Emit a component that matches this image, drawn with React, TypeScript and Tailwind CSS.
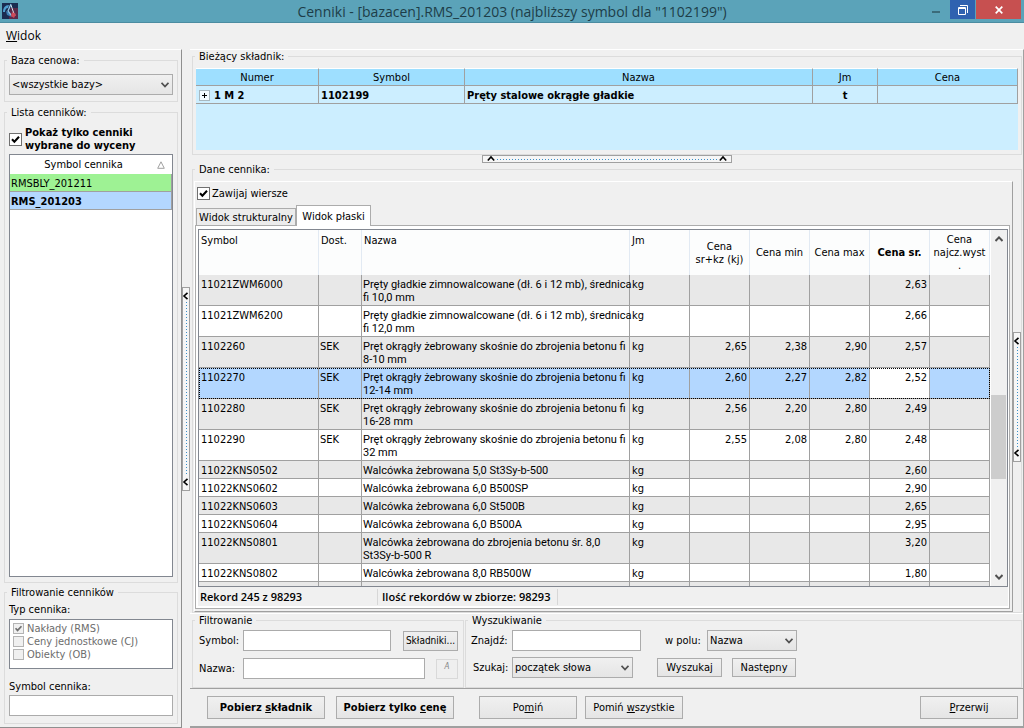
import React from "react";
import clsx from "clsx";

const priceLists = [
  { symbol: "RMSBLY_201211", selected: false },
  { symbol: "RMS_201203", selected: true },
];

const types = [
  { label: "Nakłady (RMS)", checked: true },
  { label: "Ceny jednostkowe (CJ)", checked: false },
  { label: "Obiekty (OB)", checked: false },
];

type Row = {
  symbol: string;
  dost?: string;
  name: string[];
  prices: [string, string, string, string];
};

const rows: Row[] = [
  { symbol: "11021ZWM6000", name: ["Pręty gładkie zimnowalcowane (dł. 6 i 12 mb), średnica", "fi 10,0 mm"], prices: ["", "", "", "2,63"] },
  { symbol: "11021ZWM6200", name: ["Pręty gładkie zimnowalcowane (dł. 6 i 12 mb), średnica", "fi 12,0 mm"], prices: ["", "", "", "2,66"] },
  { symbol: "1102260", dost: "SEK", name: ["Pręt okrągły żebrowany skośnie do zbrojenia betonu fi", "8-10 mm"], prices: ["2,65", "2,38", "2,90", "2,57"] },
  { symbol: "1102270", dost: "SEK", name: ["Pręt okrągły żebrowany skośnie do zbrojenia betonu fi", "12-14 mm"], prices: ["2,60", "2,27", "2,82", "2,52"] },
  { symbol: "1102280", dost: "SEK", name: ["Pręt okrągły żebrowany skośnie do zbrojenia betonu fi", "16-28 mm"], prices: ["2,56", "2,20", "2,80", "2,49"] },
  { symbol: "1102290", dost: "SEK", name: ["Pręt okrągły żebrowany skośnie do zbrojenia betonu fi", "32 mm"], prices: ["2,55", "2,08", "2,80", "2,48"] },
  { symbol: "11022KNS0502", name: ["Walcówka żebrowana 5,0 St3Sy-b-500"], prices: ["", "", "", "2,60"] },
  { symbol: "11022KNS0602", name: ["Walcówka żebrowana 6,0 B500SP"], prices: ["", "", "", "2,90"] },
  { symbol: "11022KNS0603", name: ["Walcówka żebrowana 6,0 St500B"], prices: ["", "", "", "2,65"] },
  { symbol: "11022KNS0604", name: ["Walcówka żebrowana 6,0 B500A"], prices: ["", "", "", "2,95"] },
  { symbol: "11022KNS0801", name: ["Walcówka żebrowana do zbrojenia betonu śr. 8,0", "St3Sy-b-500 R"], prices: ["", "", "", "3,20"] },
  { symbol: "11022KNS0802", name: ["Walcówka żebrowana 8,0 RB500W"], prices: ["", "", "", "1,80"] },
];

const SELECTED = "1102270";

type GroupProps = { title: string; className?: string; bodyClass?: string; children: React.ReactNode };

function Group({ title, className, bodyClass, children }: GroupProps) {
  return (
    <fieldset className={clsx("flex min-w-0 flex-col border border-[#dcdcdc]", className)}>
      <legend className="ml-0.5 px-1">{title}</legend>
      <div className={clsx("min-h-0 flex-1", bodyClass)}>{children}</div>
    </fieldset>
  );
}

function Check({ id, checked, disabled }: { id: string; checked?: boolean; disabled?: boolean }) {
  return (
    <span className="grid shrink-0">
      <input
        id={id}
        type="checkbox"
        defaultChecked={checked}
        disabled={disabled}
        className={clsx(
          "peer col-start-1 row-start-1 appearance-none border",
          disabled ? "size-[11px] border-[#b4b4b4] bg-[#f0f0f0]" : "size-[13px] border-[#707070] bg-white"
        )}
      />
      <svg
        viewBox="0 0 13 13"
        className={clsx(
          "pointer-events-none invisible col-start-1 row-start-1 peer-checked:visible",
          disabled ? "size-[11px] text-[#707070]" : "size-[13px] text-black"
        )}
      >
        <path d="M3 6.2 L5.4 8.8 L10 3.8" fill="none" stroke="currentColor" strokeWidth="2" />
      </svg>
    </span>
  );
}

function Select({ id, value, className }: { id: string; value: string; className: string }) {
  return (
    <div className={clsx("relative h-[21px]", className)}>
      <select
        id={id}
        aria-label={value}
        className="size-full appearance-none border border-[#acacac] bg-linear-to-b from-[#f0f0f0] to-[#e5e5e5] pr-5 pl-0.5"
      >
        <option>{value}</option>
      </select>
      <svg viewBox="0 0 8 6" className="pointer-events-none absolute top-2 right-1 h-[6px] w-2">
        <path d="M0.5 0.8 L4 4.5 L7.5 0.8" fill="none" stroke="#505050" strokeWidth="1.8" />
      </svg>
    </div>
  );
}

function Button({ className, children, disabled }: { className?: string; children: React.ReactNode; disabled?: boolean }) {
  return (
    <button
      type="button"
      disabled={disabled}
      className={clsx(
        "flex items-center justify-center border bg-linear-to-b whitespace-nowrap",
        disabled ? "border-[#d9d9d9] from-[#efefef] to-[#efefef] text-[#838383]" : "border-[#acacac] from-[#f0f0f0] to-[#e5e5e5]",
        className
      )}
    >
      {children}
    </button>
  );
}

const inputClass = "h-[21px] border border-[#ababab] bg-white px-1";

function SplitHandle({ vertical, className }: { vertical?: boolean; className?: string }) {
  const arrow = vertical ? "M5.5 0.8 L2 4 L5.5 7.2" : "M0.8 5.5 L4 2 L7.2 5.5";
  return (
    <button
      type="button"
      aria-label="Zwiń panel"
      className={clsx(
        "flex shrink-0 items-center border border-[#a0a0a0] bg-[#f6f6f6]",
        vertical ? "w-2 flex-col py-1" : "h-2 px-1",
        className
      )}
    >
      <svg viewBox="0 0 8 8" className="size-2 shrink-0"><path d={arrow} fill="none" stroke="#000" strokeWidth="1.6" /></svg>
      <span
        className={clsx(
          "flex-1",
          vertical
            ? "my-0.5 w-px bg-[repeating-linear-gradient(to_bottom,#3a8fc8_0_1px,transparent_1px_3px)]"
            : "mx-0.5 h-px bg-[repeating-linear-gradient(to_right,#3a8fc8_0_1px,transparent_1px_3px)]"
        )}
      />
      <svg viewBox="0 0 8 8" className="size-2 shrink-0"><path d={arrow} fill="none" stroke="#000" strokeWidth="1.6" /></svg>
    </button>
  );
}

function TitleBar() {
  return (
    <header className="grid h-[23px] shrink-0 grid-cols-[1fr_auto_1fr] border-b border-[#4b8ca1] bg-[#5ba3b9]">
      <svg viewBox="0 0 16 16" className="mt-[3px] ml-0.5 size-4">
        <rect width="16" height="16" fill="#1b2c50" />
        <path d="M8 5 H16 V16 H7 Z" fill="#5a2a48" />
        <path d="M1 9 C1 5 3 2 7 2 L6 5 C4 5 3 7 3 9 Z" fill="#4f9fd0" />
        <path d="M4 8 L8 10 L10 14 L5 12 Z" fill="#3c7fb4" />
        <path d="M9 1 L6 8 L9 12" fill="none" stroke="#8fc3e4" strokeWidth="1.3" />
        <path d="M9 2 L11 8 L13 13" fill="none" stroke="#d5e3ee" strokeWidth="1" />
        <path d="M10 9 L14 11 L12 15 L9 13 Z" fill="#cf4a58" />
      </svg>
      <h1 className="font-['Open_Sans',sans-serif] text-sm leading-[23px] text-[#1d3d48]">
        Cenniki - [bazacen].RMS_201203 (najbliższy symbol dla "1102199")
      </h1>
      <div className="flex h-[19px] justify-end pr-[3px]">
        <button type="button" aria-label="Minimalizuj" className="flex w-7 items-center justify-center pt-1">
          <span className="h-0.5 w-2 bg-[#3b6b7a]" />
        </button>
        <button type="button" aria-label="Przywróć" className="flex w-[25px] items-center justify-center bg-[#2f62b0]">
          <svg viewBox="0 0 10 10" className="size-[10px]">
            <path d="M0.5 2.5 H7.5 V9.5 H0.5 Z M0.5 3.5 H7.5 M2 0.5 H9.5 V8" fill="none" stroke="#fff" />
          </svg>
        </button>
        <button type="button" aria-label="Zamknij" className="ml-px flex w-[45px] items-center justify-center bg-[#c75050]">
          <svg viewBox="0 0 8 8" className="size-2">
            <path d="M0.7 0.7 L7.3 7.3 M7.3 0.7 L0.7 7.3" fill="none" stroke="#fff" strokeWidth="1.7" />
          </svg>
        </button>
      </div>
    </header>
  );
}

function Sidebar() {
  return (
    <aside className="flex w-[182px] shrink-0 flex-col border-t border-r border-b border-t-white border-r-[#8f8f8f] border-b-[#8f8f8f] pt-1 pr-[3px] pb-[3px] pl-1">
      <Group title="Baza cenowa:" bodyClass="px-1 pt-[7px] pb-1.5">
        <Select id="baza" value="<wszystkie bazy>" className="w-full" />
      </Group>

      <Group title="Lista cenników:" className="mt-1 min-h-0 flex-1" bodyClass="flex flex-col px-1 pt-[7px] pb-[5px]">
        <label htmlFor="wybrane" className="mb-0.5 flex items-center gap-[3px] font-bold">
          <Check id="wybrane" checked />
          <span>
            Pokaż tylko cenniki
            <br />
            wybrane do wyceny
          </span>
        </label>
        <div className="min-h-0 flex-1 overflow-hidden border border-[#828790] bg-white">
          <table className="w-full border-separate border-spacing-0 text-left">
            <thead>
              <tr>
                <th className="h-[19px] font-normal">
                  <span className="flex items-center">
                    <span className="flex-1 text-center">Symbol cennika</span>
                    <svg viewBox="0 0 8 8" className="mr-[7px] size-2">
                      <path d="M4 0.8 L7.3 7.3 H0.7 Z" fill="#fff" stroke="#a0a0a0" />
                    </svg>
                  </span>
                </th>
              </tr>
            </thead>
            <tbody>
              {priceLists.map((p) => (
                <tr key={p.symbol}>
                  <td
                    className={clsx(
                      "h-[18px] border-r border-b border-[#a0a0a0] pt-0.5 pl-px",
                      p.selected ? "bg-[#b3d7ff] font-bold" : "bg-[#9ef294]"
                    )}
                  >
                    {p.symbol}
                  </td>
                </tr>
              ))}
            </tbody>
          </table>
        </div>
      </Group>

      <Group title="Filtrowanie cenników" className="mt-[3px]" bodyClass="flex flex-col px-1 pt-1 pb-[7px]">
        <span>Typ cennika:</span>
        <div className="mt-[3px] h-[50px] border border-[#828790] bg-white px-[3px] pt-0.5 text-[#6d6d6d]">
          {types.map((t, i) => (
            <label key={t.label} htmlFor={`typ${i}`} className="flex h-[13px] items-center gap-[3px]">
              <Check id={`typ${i}`} checked={t.checked} disabled />
              {t.label}
            </label>
          ))}
        </div>
        <label htmlFor="symbol-cennika" className="mt-[11px] mb-0.5">Symbol cennika:</label>
        <input id="symbol-cennika" className={inputClass} />
      </Group>
    </aside>
  );
}

function CurrentComponent() {
  const head = "h-[18px] border-t border-r border-b border-t-white border-r-[#a0a0a0] border-b-[#a0a0a0] bg-[#9edfff] font-normal";
  const cell = "h-[18px] border-r border-b border-[#a0a0a0] pt-0.5";
  return (
    <Group title="Bieżący składnik:" className="mr-px ml-0.5 shrink-0" bodyClass="px-[3px] pt-[5px] pb-1">
      <div className="h-[82px] bg-[#cceeff]">
        <table className="w-full table-fixed border-separate border-spacing-0">
          <colgroup>
            <col className="w-[123px]" />
            <col className="w-[146px]" />
            <col />
            <col className="w-[65px]" />
            <col className="w-[140px]" />
          </colgroup>
          <thead>
            <tr>
              <th className={head}>Numer</th>
              <th className={head}>Symbol</th>
              <th className={head}>Nazwa</th>
              <th className={head}>Jm</th>
              <th className={head}>Cena</th>
            </tr>
          </thead>
          <tbody className="font-bold">
            <tr>
              <td className={cell}>
                <span className="flex items-center gap-1 pl-[3px]">
                  <button type="button" aria-label="Rozwiń" className="flex size-[11px] items-center justify-center border border-[#a8b8c0] bg-[#f4fbff]">
                    <svg viewBox="0 0 5 5" className="size-[5px]"><path d="M0 2.5 H5 M2.5 0 V5" stroke="#000" /></svg>
                  </button>
                  1 M 2
                </span>
              </td>
              <td className={clsx(cell, "pl-0.5")}>1102199</td>
              <td className={clsx(cell, "pl-0.5")}>Pręty stalowe okrągłe gładkie</td>
              <td className={clsx(cell, "text-center")}>t</td>
              <td className={cell} />
            </tr>
          </tbody>
        </table>
      </div>
    </Group>
  );
}

function PriceGrid() {
  const head = "h-[45px] border-r border-[#e2eaf3] px-0.5 font-normal";
  const cell = "border-r border-b border-[#a0a0a0] pt-[3px] pb-px align-top";
  return (
    <div className="flex min-h-0 flex-1 border border-[#828790] bg-white">
      <div className="min-w-0 flex-1 overflow-hidden">
        <table className="w-full table-fixed border-separate border-spacing-0">
          <colgroup>
            <col className="w-[120px]" />
            <col className="w-[43px]" />
            <col />
            <col className="w-[60px]" />
            <col className="w-[60px]" />
            <col className="w-[60px]" />
            <col className="w-[60px]" />
            <col className="w-[60px]" />
            <col className="w-[60px]" />
          </colgroup>
          <thead className="bg-[#fcfdfd]">
            <tr>
              <th className={clsx(head, "pt-1 text-left align-top")}>Symbol</th>
              <th className={clsx(head, "pt-1 text-left align-top")}>Dost.</th>
              <th className={clsx(head, "pt-1 text-left align-top")}>Nazwa</th>
              <th className={clsx(head, "pt-1 text-left align-top")}>Jm</th>
              <th className={head}>Cena<br />sr+kz (kj)</th>
              <th className={clsx(head, "whitespace-nowrap")}>Cena min</th>
              <th className={clsx(head, "whitespace-nowrap")}>Cena max</th>
              <th className={clsx(head, "whitespace-nowrap")}><b>Cena sr.</b></th>
              <th className={head}>Cena<br />najcz.wyst<br />.</th>
            </tr>
          </thead>
          <tbody>
            {rows.map((r, i) => {
              const selected = r.symbol === SELECTED;
              return (
                <tr
                  key={r.symbol}
                  className={clsx(
                    selected
                      ? "bg-[#b3d7ff] outline-1 -outline-offset-1 outline-black outline-dotted"
                      : i % 2 === 0 ? "bg-[#e8e8e8]" : "bg-white"
                  )}
                >
                  <td className={clsx(cell, "px-0.5")}>{r.symbol}</td>
                  <td className={clsx(cell, "px-px")}>{r.dost}</td>
                  <td className={clsx(cell, "pl-px font-[Roboto,sans-serif] whitespace-nowrap")}>
                    {r.name.map((line) => <div key={line}>{line}</div>)}
                  </td>
                  <td className={clsx(cell, "px-0.5")}>kg</td>
                  {r.prices.map((p, k) => (
                    <td key={k} className={clsx(cell, "px-0.5 text-right", selected && k === 3 && "bg-white")}>{p}</td>
                  ))}
                  <td className={cell} />
                </tr>
              );
            })}
            <tr className="bg-[#e8e8e8]">
              {Array.from({ length: 9 }, (_, k) => <td key={k} className={clsx(cell, "h-[18px]")} />)}
            </tr>
          </tbody>
        </table>
      </div>
      <div className="ml-px flex w-4 shrink-0 flex-col items-center bg-[#f0f0f0] py-1.5">
        <svg viewBox="0 0 8 6" className="h-1.5 w-2"><path d="M0.5 5 L4 1.4 L7.5 5" fill="none" stroke="#505050" strokeWidth="2" /></svg>
        <div className="flex w-full flex-1 flex-col">
          <div className="flex-[152]" />
          <div className="w-[15px] flex-[84] bg-[#cdcdcd]" />
          <div className="flex-[94]" />
        </div>
        <svg viewBox="0 0 8 6" className="h-1.5 w-2"><path d="M0.5 1 L4 4.6 L7.5 1" fill="none" stroke="#505050" strokeWidth="2" /></svg>
      </div>
    </div>
  );
}

function PriceListData() {
  return (
    <Group title="Dane cennika:" className="mr-px ml-0.5 min-h-0 flex-1" bodyClass="flex pt-[5px] pl-px">
      <div className="flex min-w-0 flex-1 flex-col border border-t-white border-r-[#a0a0a0] border-b-[#a0a0a0] border-l-white pr-0.5 pb-0.5">
        <label htmlFor="zawijaj" className="mt-[5px] mb-[5px] ml-0.5 flex items-center gap-0.5 self-start">
          <Check id="zawijaj" checked />
          Zawijaj wiersze
        </label>
        <div role="tablist" className="flex h-5 shrink-0 items-end pl-px">
          <button type="button" role="tab" aria-selected="false" className="h-[17px] w-[100px] border border-b-0 border-[#acacac] bg-[#ececec] whitespace-nowrap">
            Widok strukturalny
          </button>
          <button type="button" role="tab" aria-selected="true" className="z-10 -mb-px h-[21px] w-[75px] border border-b-0 border-[#acacac] bg-white whitespace-nowrap">
            Widok płaski
          </button>
        </div>
        <div className="flex min-h-0 flex-1 flex-col border border-[#acacac] bg-white pt-[3px] pr-px pb-0.5 pl-0.5">
          <PriceGrid />
          <div className="flex h-[19px] shrink-0 items-center bg-[#f0f0f0] font-['Open_Sans',sans-serif] font-semibold">
            <span className="w-[180px] border-r border-[#d7d7d7] pl-0.5 leading-4">Rekord 245 z 98293</span>
            <span className="w-[180px] border-r border-[#d7d7d7] pl-1 leading-4">Ilość rekordów w zbiorze: 98293</span>
          </div>
        </div>
      </div>
      <SplitHandle vertical className="h-[130px] self-center" />
    </Group>
  );
}

function SearchPanels() {
  return (
    <div className="flex shrink-0 gap-px border-t border-t-white pr-px pl-0.5">
      <Group title="Filtrowanie" className="w-[272px]" bodyClass="pt-[3px] pr-[5px] pb-2 pl-1.5">
        <div className="flex items-center">
          <label htmlFor="f-symbol" className="w-11">Symbol:</label>
          <input id="f-symbol" className={clsx(inputClass, "w-[148px]")} />
          <Button className="ml-auto h-5 w-[55px] text-[10px]">Składniki...</Button>
        </div>
        <div className="mt-[7px] flex items-center">
          <label htmlFor="f-nazwa" className="w-11">Nazwa:</label>
          <input id="f-nazwa" className={clsx(inputClass, "w-[182px]")} />
          <Button disabled className="ml-auto h-5 w-[22px] pb-1 text-[8px] italic">A</Button>
        </div>
      </Group>
      <Group title="Wyszukiwanie" className="flex-1" bodyClass="pt-[3px] pb-2 pl-[5px]">
        <div className="flex items-center">
          <label htmlFor="znajdz" className="w-[41px]">Znajdź:</label>
          <input id="znajdz" className={clsx(inputClass, "w-[129px]")} />
          <label htmlFor="pole" className="ml-6 w-[42px]">w polu:</label>
          <Select id="pole" value="Nazwa" className="w-[90px]" />
        </div>
        <div className="mt-1.5 flex items-center">
          <label htmlFor="szukaj" className="w-[41px] pl-0.5">Szukaj:</label>
          <Select id="szukaj" value="początek słowa" className="w-[121px]" />
          <Button className="ml-6 h-[19px] w-[65px]">Wyszukaj</Button>
          <Button className="ml-2.5 h-[19px] w-16">Następny</Button>
        </div>
      </Group>
    </div>
  );
}

function Footer() {
  return (
    <footer className="flex h-[38px] shrink-0 items-center border-t border-[#a0a0a0] pr-[5px] pl-[17px]">
      <Button className="h-[23px] w-[118px] font-bold"><span>Pobierz <u>s</u>kładnik</span></Button>
      <Button className="ml-[11px] h-[23px] w-[118px] font-bold"><span>Pobierz tylko <u>c</u>enę</span></Button>
      <Button className="ml-[25px] h-[23px] w-[98px]"><span>Po<u>m</u>iń</span></Button>
      <Button className="ml-2 h-[23px] w-[98px]"><span>Pomiń <u>w</u>szystkie</span></Button>
      <Button className="ml-auto h-[23px] w-[98px]"><span><u>P</u>rzerwij</span></Button>
    </footer>
  );
}

export default function App() {
  return (
    <div className="flex h-screen flex-col bg-[#f0f0f0] font-['DejaVu_Sans_Condensed','DejaVu_Sans',sans-serif] text-[11px] leading-[13px] text-black">
      <TitleBar />
      <nav className="flex h-[26px] shrink-0 items-center pl-1.5 font-['Open_Sans',sans-serif] text-xs">
        <button type="button"><u>W</u>idok</button>
      </nav>
      <div className="flex min-h-0 flex-1">
        <Sidebar />
        <SplitHandle vertical className="h-[204px] self-center" />
        <main className="flex min-w-0 flex-1 flex-col border-t border-r border-b-2 border-t-white border-r-[#a0a0a0] border-b-[#a0a0a0]">
          <CurrentComponent />
          <SplitHandle className="w-[250px] self-center" />
          <PriceListData />
          <SearchPanels />
          <Footer />
        </main>
      </div>
    </div>
  );
}
